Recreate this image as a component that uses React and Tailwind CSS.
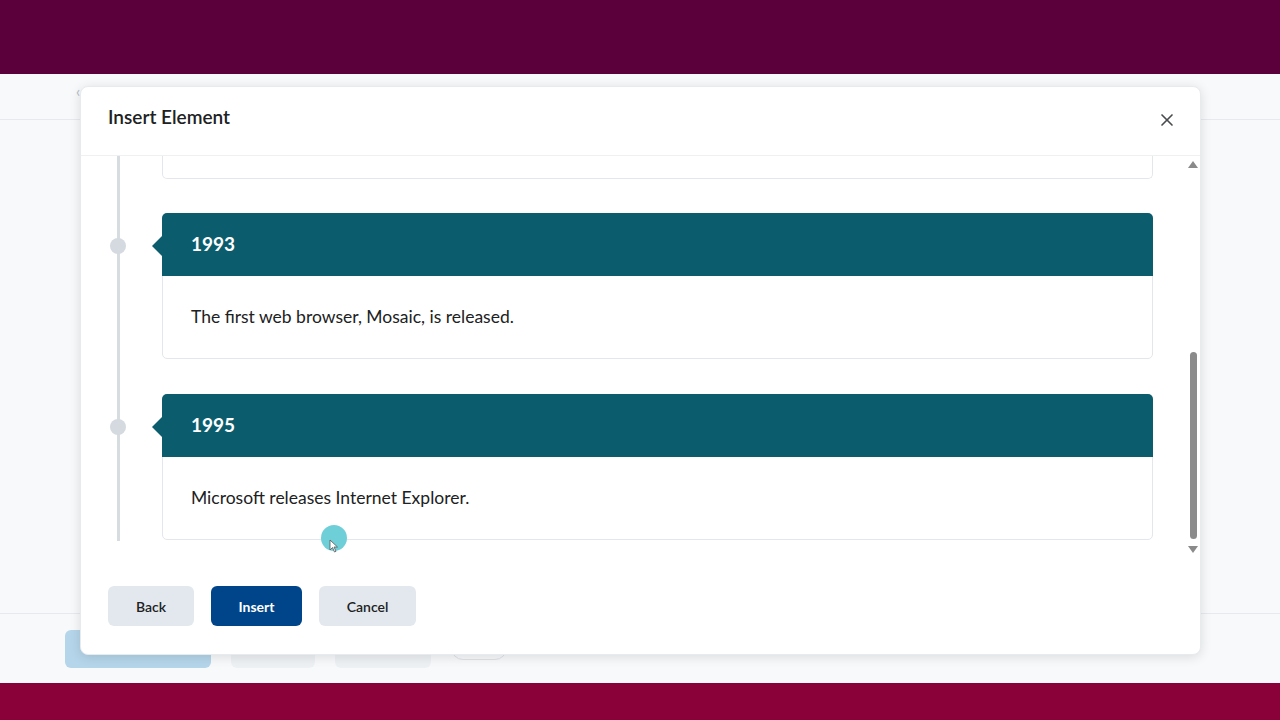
import { X } from 'lucide-react';

const entries = [
  { year: '1993', text: 'The first web browser, Mosaic, is released.' },
  { year: '1995', text: 'Microsoft releases Internet Explorer.' },
];

function Row({ children, dot, pb }) {
  return (
    <div className="flex">
      <div className="w-[74px] shrink-0 flex justify-center relative">
        <div className="w-[3px] bg-[#d7dce1]" />
        {dot && <div className="absolute top-[25px] left-[29px] w-[16px] h-[16px] rounded-full bg-[#d5dae0]" />}
      </div>
      <div className="w-[7px] shrink-0" />
      <div className={`w-[991px] ${pb}`}>{children}</div>
    </div>
  );
}

function Card({ year, text }) {
  return (
    <div className="relative rounded-[5px] border border-[#e3e7eb] bg-white">
      <div className="relative h-[63px] -m-px rounded-t-[5px] bg-[#0b5d6d] flex items-center pl-[29px]">
        <div className="absolute -left-[10px] top-[23px] w-0 h-0 border-y-[10px] border-y-transparent border-r-[10px] border-r-[#0b5d6d]" />
        <span className="text-white text-[19px] font-bold">{year}</span>
      </div>
      <div className="h-[83px] flex items-center pl-[28px] pt-[2px] text-[17.5px] text-[#202122]">{text}</div>
    </div>
  );
}

export default function App() {
  return (
    <div className="h-screen flex flex-col overflow-hidden" style={{ fontFamily: 'Lato, "Open Sans", sans-serif' }}>
      <div className="h-[74px] bg-[#5c003b] shrink-0" />

      <div className="flex-1 relative bg-[#f7f9fb] flex flex-col">
        <div className="h-[46px] border-b border-[#e6eaee] flex items-start pt-[6px] pl-[76px] text-[15px] text-[#b3bac2]">
          <span className="mr-2">‹</span> Back to ... Edit Timeline
        </div>
        <div className="flex-1" />
        <div className="h-[70px] border-t border-[#e6eaee] flex items-start pt-[16px] pl-[65px] gap-[20px]">
          <div className="w-[146px] h-[38px] rounded-[6px] bg-[#b5d5ea]" />
          <div className="w-[84px] h-[38px] rounded-[6px] bg-[#eef1f4]" />
          <div className="w-[96px] h-[38px] rounded-[6px] bg-[#eef1f4]" />
          <div className="w-[56px] h-[24px] mt-[6px] rounded-full border border-[#dfe3e7]" />
        </div>

        <div className="absolute left-[80px] top-[12px] w-[1121px] h-[569px] bg-white rounded-[8px] shadow-[0_2px_12px_rgba(0,0,0,0.12)] border border-[#e8ebee] flex flex-col">
          <div className="h-[69px] shrink-0 flex items-center justify-between pl-[27px] pr-[23px] border-b border-[#eef0f2]">
            <h2 className="text-[19px] font-semibold text-[#202122] -mt-[8px]">Insert Element</h2>
            <X size={20} strokeWidth={2} className="text-[#494c4f] -mt-[2px]" />
          </div>

          <div className="h-[400px] shrink-0 flex">
            <div className="flex-1 flex flex-col">
              <Row pb="pb-[34px]">
                <div className="h-[23px] rounded-b-[5px] border border-t-0 border-[#e3e7eb]" />
              </Row>
              {entries.map((e, i) => (
                <Row key={e.year} dot pb={i === 0 ? 'pb-[35px]' : 'pb-[1px]'}>
                  <Card year={e.year} text={e.text} />
                </Row>
              ))}
              <div className="flex-1" />
            </div>
            <div className="w-[14px] flex flex-col items-center pt-[5px]">
              <div className="w-0 h-0 border-x-[5px] border-x-transparent border-b-[7px] border-b-[#8a8a8a]" />
              <div className="flex-1 flex flex-col justify-end pb-[7px]">
                <div className="w-[7px] h-[187px] rounded-full bg-[#8b8b8b]" />
              </div>
              <div className="w-0 h-0 border-x-[5px] border-x-transparent border-t-[7px] border-t-[#8a8a8a] mb-[3px]" />
            </div>
          </div>

          <div className="flex gap-[17px] pl-[27px] pt-[30px] relative">
            <button className="w-[86px] h-[40px] rounded-[6px] bg-[#e3e8ee] text-[14px] font-semibold text-[#202122]">Back</button>
            <button className="w-[91px] h-[40px] rounded-[6px] bg-[#004489] text-[14px] font-bold text-white">Insert</button>
            <button className="w-[97px] h-[40px] rounded-[6px] bg-[#e3e8ee] text-[14px] font-semibold text-[#202122]">Cancel</button>
            <div className="absolute left-[240px] -top-[31px] w-[26px] h-[26px] rounded-full bg-[#6fcfd8]">
              <svg width="10" height="14" viewBox="0 0 10 14" className="absolute left-[8px] top-[14px]">
                <path d="M1 1 L1 11 L3.5 8.5 L5.5 13 L7 12.3 L5 8 L8.5 8 Z" fill="#fff" stroke="#555" strokeWidth="0.8" />
              </svg>
            </div>
          </div>
        </div>
      </div>

      <div className="h-[37px] bg-[#8a0039] shrink-0" />
    </div>
  );
}
